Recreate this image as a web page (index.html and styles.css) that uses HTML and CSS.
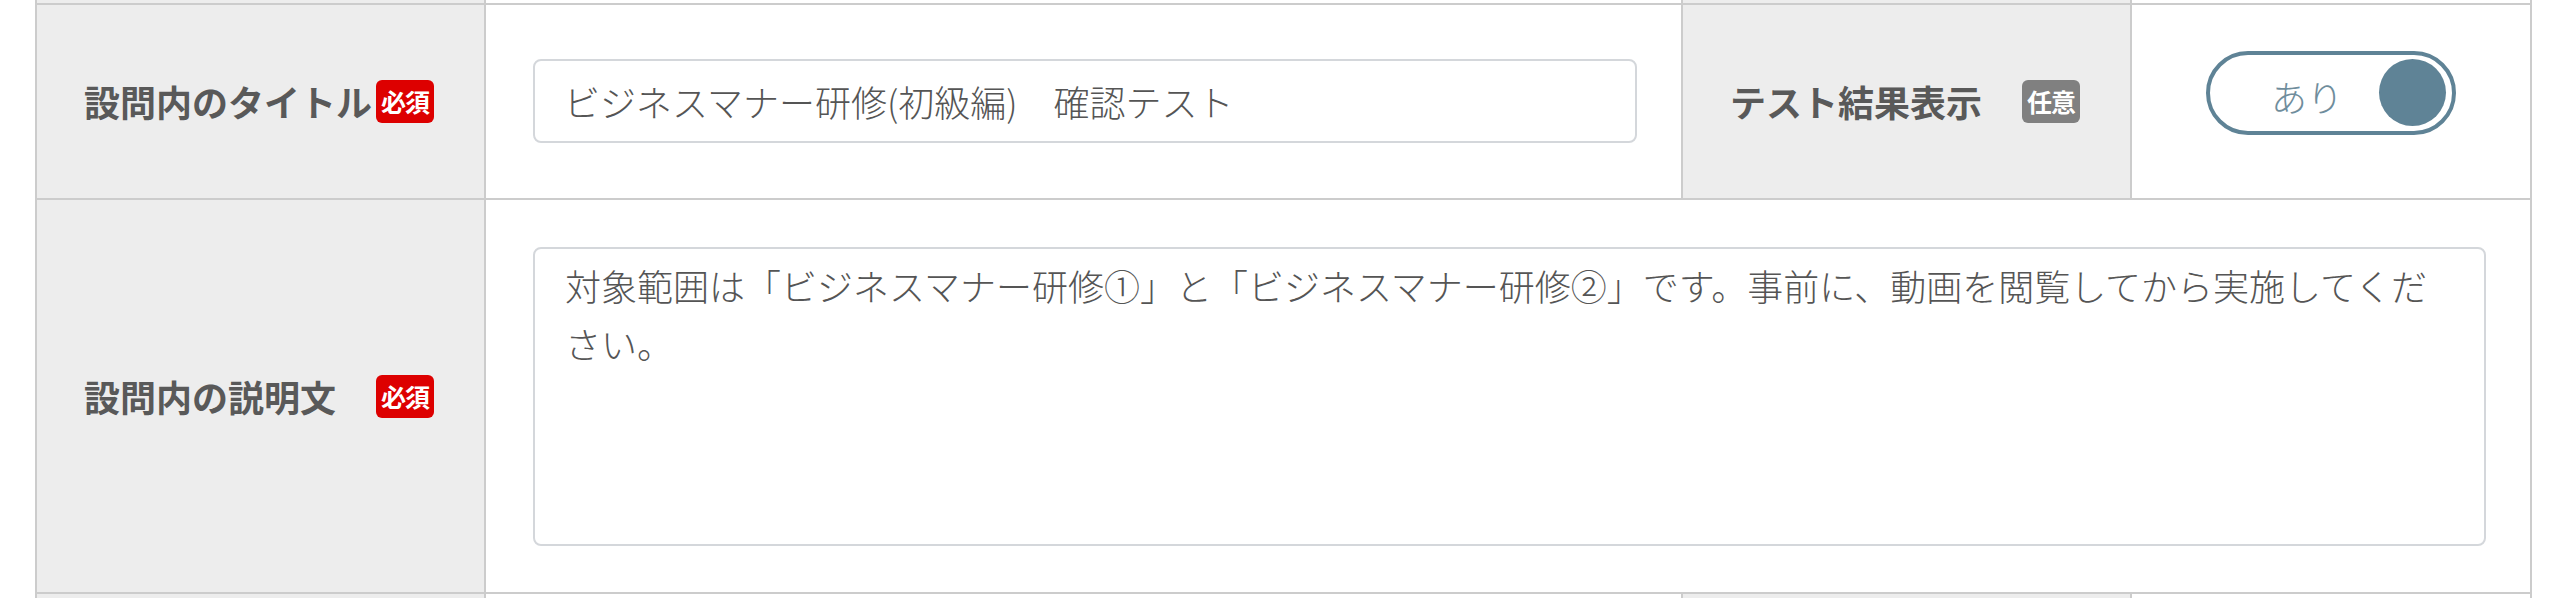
FILE: index.html
```html
<!DOCTYPE html>
<html lang="ja">
<head>
<meta charset="utf-8">
<title>設問設定</title>
<link rel="stylesheet" href="styles.css">
</head>
<body>
<div class="form-table">
  <div class="cell cell-label cell-stub"></div>
  <div class="cell cell-stub"></div>
  <div class="cell cell-label cell-stub"></div>
  <div class="cell cell-stub"></div>

  <div class="cell cell-label">
    <span class="label-text">設問内のタイトル</span>
    <span class="badge badge-required">必須</span>
  </div>
  <div class="cell cell-field">
    <input class="text-input" type="text" value="ビジネスマナー研修(初級編)　確認テスト">
  </div>
  <div class="cell cell-label">
    <span class="label-text">テスト結果表示</span>
    <span class="badge badge-optional">任意</span>
  </div>
  <div class="cell cell-field cell-toggle">
    <div class="toggle">
      <span class="toggle-text">あり</span>
      <span class="toggle-knob"></span>
    </div>
  </div>

  <div class="cell cell-label">
    <span class="label-text">設問内の説明文</span>
    <span class="badge badge-required">必須</span>
  </div>
  <div class="cell cell-field cell-wide">
    <textarea class="text-area">対象範囲は「ビジネスマナー研修①」と「ビジネスマナー研修②」です。事前に、動画を閲覧してから実施してください。</textarea>
  </div>

  <div class="cell cell-label cell-next"></div>
  <div class="cell cell-next"></div>
  <div class="cell cell-label cell-next"></div>
  <div class="cell cell-next"></div>
</div>
</body>
</html>
```

FILE: styles.css
```css
* {
  box-sizing: border-box;
}

html, body {
  margin: 0;
  padding: 0;
  background: #ffffff;
}

body {
  font-family: "Noto Sans CJK JP", "Noto Sans", sans-serif;
  color: #595959;
}

.form-table {
  display: grid;
  grid-template-columns: 447px 1195px 447px 398px;
  gap: 2px;
  padding: 0 2px;
  background: #cccccc;
  margin-left: 35px;
  width: max-content;
}

.cell {
  background: #ffffff;
}

.cell-stub {
  height: 3px;
}

.cell-next {
  height: 120px;
}

.cell-label {
  background: #ededed;
  display: flex;
  align-items: center;
  justify-content: space-between;
  padding: 0 50px 0 47px;
}

.label-text {
  font-size: 36px;
  font-weight: 700;
  color: #595959;
  white-space: nowrap;
  line-height: 1.4;
}

.badge {
  display: inline-flex;
  align-items: center;
  justify-content: center;
  width: 58px;
  height: 43px;
  border-radius: 6px;
  color: #ffffff;
  font-size: 25px;
  font-weight: 700;
  line-height: 1;
  letter-spacing: -1px;
  flex: none;
}

.badge-required {
  background: #dd0000;
}

.badge-optional {
  background: #808080;
}

.cell-field {
  display: flex;
  align-items: center;
  padding: 54px 44px 55px 47px;
}

.cell-wide {
  grid-column: span 3;
  padding: 47px 44px 46px 47px;
}

.text-input {
  width: 100%;
  height: 84px;
  border: 2px solid #d4d7db;
  border-radius: 8px;
  padding: 0 29px;
  font-family: "Noto Sans CJK JP", "Noto Sans", sans-serif;
  font-size: 36px;
  font-weight: 300;
  color: #555555;
  background: #ffffff;
  outline: none;
}

.text-area {
  display: block;
  width: 100%;
  height: 299px;
  border: 2px solid #d4d7db;
  border-radius: 8px;
  padding: 8px 40px 8px 30px;
  font-family: "Noto Sans CJK JP", "Noto Sans", sans-serif;
  font-size: 36px;
  font-weight: 300;
  line-height: 1.6;
  color: #555555;
  background: #ffffff;
  resize: none;
  outline: none;
}

.cell-toggle {
  justify-content: center;
  padding: 0;
}

.toggle {
  display: flex;
  align-items: center;
  width: 250px;
  height: 84px;
  border: 4px solid #5f8396;
  border-radius: 42px;
  margin-bottom: 18px;
  background: #ffffff;
}

.toggle-text {
  margin-left: 61px;
  font-size: 36px;
  font-weight: 300;
  color: #6f8d9c;
  line-height: 1;
  padding-top: 6px;
}

.toggle-knob {
  margin-left: auto;
  margin-right: 6px;
  width: 67px;
  height: 67px;
  border-radius: 50%;
  background: #5f8396;
}
```
